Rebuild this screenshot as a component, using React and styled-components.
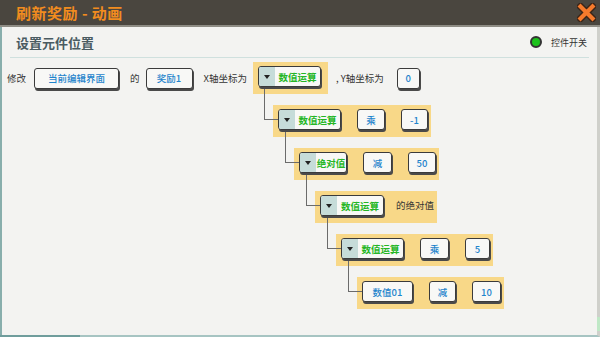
import React from 'react';
import styled, { createGlobalStyle } from 'styled-components';

const GlobalStyle = createGlobalStyle`
  html, body {
    margin: 0;
    padding: 0;
    width: 600px;
    height: 337px;
    overflow: hidden;
    background: #f3f3f1;
    font-family: "Noto Sans CJK SC", "Noto Sans", sans-serif;
  }
`

const Frame = styled.div`
  width: 600px;
  height: 337px;
  display: flex;
  flex-direction: column;
`

const TitleBar = styled.div`
  height: 25px;
  flex: none;
  background: #4a463f;
  border-bottom: 2px solid #8e8c84;
  display: flex;
  align-items: center;
  justify-content: space-between;
  padding: 0 4px 0 16px;
`

const Title = styled.div`
  color: #f28c1e;
  font-size: 15px;
  font-weight: 700;
  letter-spacing: 0.5px;
`

const Panel = styled.div`
  flex: 1;
  position: relative;
  background: #f3f3f1;
  border-left: 2px solid #88aeac;
  border-right: 3px solid #cfd0cb;
  border-bottom: 2px solid #a6c4c2;
  display: flex;
  flex-direction: column;
`

const Header = styled.div`
  height: 30px;
  margin: 0 8px;
  padding: 0 2px 0 6px;
  border-bottom: 1px solid #cfe0de;
  display: flex;
  align-items: center;
  justify-content: space-between;
`

const SubTitle = styled.div`
  color: #4a5b61;
  font-size: 13px;
  font-weight: 700;
`

const Switch = styled.div`
  display: flex;
  align-items: center;
  font-size: 9px;
  color: #333;
`

const Dot = styled.span`
  width: 8px;
  height: 8px;
  border-radius: 50%;
  background: #1cc21c;
  border: 2px solid #333;
  margin-right: 9px;
`

const Content = styled.div`
  padding-top: 4px;
  display: flex;
  flex-direction: column;
`

const Sentence = styled.div`
  display: flex;
  align-items: center;
  height: 32px;
`

const Label = styled.span`
  font-size: 9.5px;
  color: #333;
  white-space: nowrap;
  margin-left: ${p => p.$ml || 0}px;
`

const Button = styled.div`
  height: 21px;
  box-sizing: border-box;
  width: ${p => p.$w}px;
  margin-left: ${p => p.$ml || 0}px;
  border: 1px solid #3b3b3b;
  border-radius: 3px;
  background: #f8f8f6;
  box-shadow: 1px 2px 0 #4a4a4a;
  display: flex;
  align-items: center;
  justify-content: center;
  font-size: 9.5px;
  font-weight: 500;
  color: #1f84cc;
  white-space: nowrap;
  flex: none;
  overflow: hidden;
`

const NodeButton = styled(Button)`
  justify-content: flex-start;
  color: #25b625;
  font-weight: 700;
`

const Arrow = styled.span`
  width: 16px;
  height: 100%;
  background: #c6dcd9;
  display: flex;
  align-items: center;
  justify-content: center;
  flex: none;

  &::after {
    content: '';
    border-left: 3px solid transparent;
    border-right: 3px solid transparent;
    border-top: 4px solid #222;
  }
`

const NodeText = styled.span`
  flex: 1;
  text-align: center;
`

const Block = styled.div`
  position: relative;
  display: flex;
  align-items: flex-start;
  gap: ${p => p.$gap || 16}px;
  align-self: flex-start;
  background: #f8d888;
  padding: 4px ${p => p.$pr || 3}px 7px 5px;
  margin-left: ${p => p.$ml || 0}px;
  margin-top: ${p => p.$mt || 0}px;

  ${Label} {
    line-height: 21px;
  }
`

const Elbow = styled.span`
  position: absolute;
  left: -9px;
  top: -16px;
  width: 14px;
  height: 31px;
  box-sizing: border-box;
  border-left: 1px solid #6b6b6b;
  border-bottom: 1px solid #6b6b6b;
`

const ScrollThumbX = styled.span`
  position: absolute;
  left: -2px;
  bottom: -2px;
  width: 80px;
  height: 2px;
  background: #6f9d9c;
`

const ScrollThumbY = styled.span`
  position: absolute;
  right: -3px;
  bottom: 4px;
  width: 3px;
  height: 14px;
  background: #bfe8c6;
`

const CloseIcon = () => (
  <svg width="19" height="19" viewBox="0 0 19 19">
    <path d="M3.5 3.5 L15.5 15.5 M15.5 3.5 L3.5 15.5" stroke="#3a2418" strokeWidth="7" strokeLinecap="square" />
    <path d="M3.5 3.5 L15.5 15.5 M15.5 3.5 L3.5 15.5" stroke="#f57a2c" strokeWidth="4.2" strokeLinecap="square" />
  </svg>
)

const Node = ({ w, children, plain }) => (
  plain
    ? <Button $w={w}>{children}</Button>
    : (
      <NodeButton $w={w}>
        <Arrow />
        <NodeText>{children}</NodeText>
      </NodeButton>
    )
)

const tree = [
  { node: '数值运算', w: 63, items: [{ t: '乘', w: 28 }, { t: '-1', w: 27 }] },
  { node: '绝对值', w: 48, items: [{ t: '减', w: 29 }, { t: '50', w: 28 }] },
  { node: '数值运算', w: 64, label: '的绝对值' },
  { node: '数值运算', w: 63, items: [{ t: '乘', w: 29 }, { t: '5', w: 25 }] },
  { node: '数值01', w: 51, plain: true, items: [{ t: '减', w: 27 }, { t: '10', w: 29 }] },
]

export default function App() {
  return (
    <Frame>
      <GlobalStyle />
      <TitleBar>
        <Title>刷新奖励 - 动画</Title>
        <CloseIcon />
      </TitleBar>
      <Panel>
        <Header>
          <SubTitle>设置元件位置</SubTitle>
          <Switch><Dot />控件开关</Switch>
        </Header>
        <Content>
          <Sentence>
            <Label $ml={5}>修改</Label>
            <Button $w={85} $ml={8}>当前编辑界面</Button>
            <Label $ml={11}>的</Label>
            <Button $w={47} $ml={6}>奖励1</Button>
            <Label $ml={11}>X轴坐标为</Label>
            <Block $ml={6} $pr={7}>
              <Node w={63}>数值运算</Node>
            </Block>
            <Label $ml={8}>, Y轴坐标为</Label>
            <Button $w={23} $ml={13}>0</Button>
          </Sentence>
          {tree.map((row, i) => (
            <Block key={i} $ml={271 + i * 21} $mt={11} $gap={row.label ? 12 : 16} $pr={row.label ? 3 : 3}>
              <Elbow />
              <Node w={row.w} plain={row.plain}>{row.node}</Node>
              {row.label && <Label>{row.label}</Label>}
              {row.items && row.items.map((it, j) => (
                <Button key={j} $w={it.w}>{it.t}</Button>
              ))}
            </Block>
          ))}
        </Content>
        <ScrollThumbX />
        <ScrollThumbY />
      </Panel>
    </Frame>
  );
}
